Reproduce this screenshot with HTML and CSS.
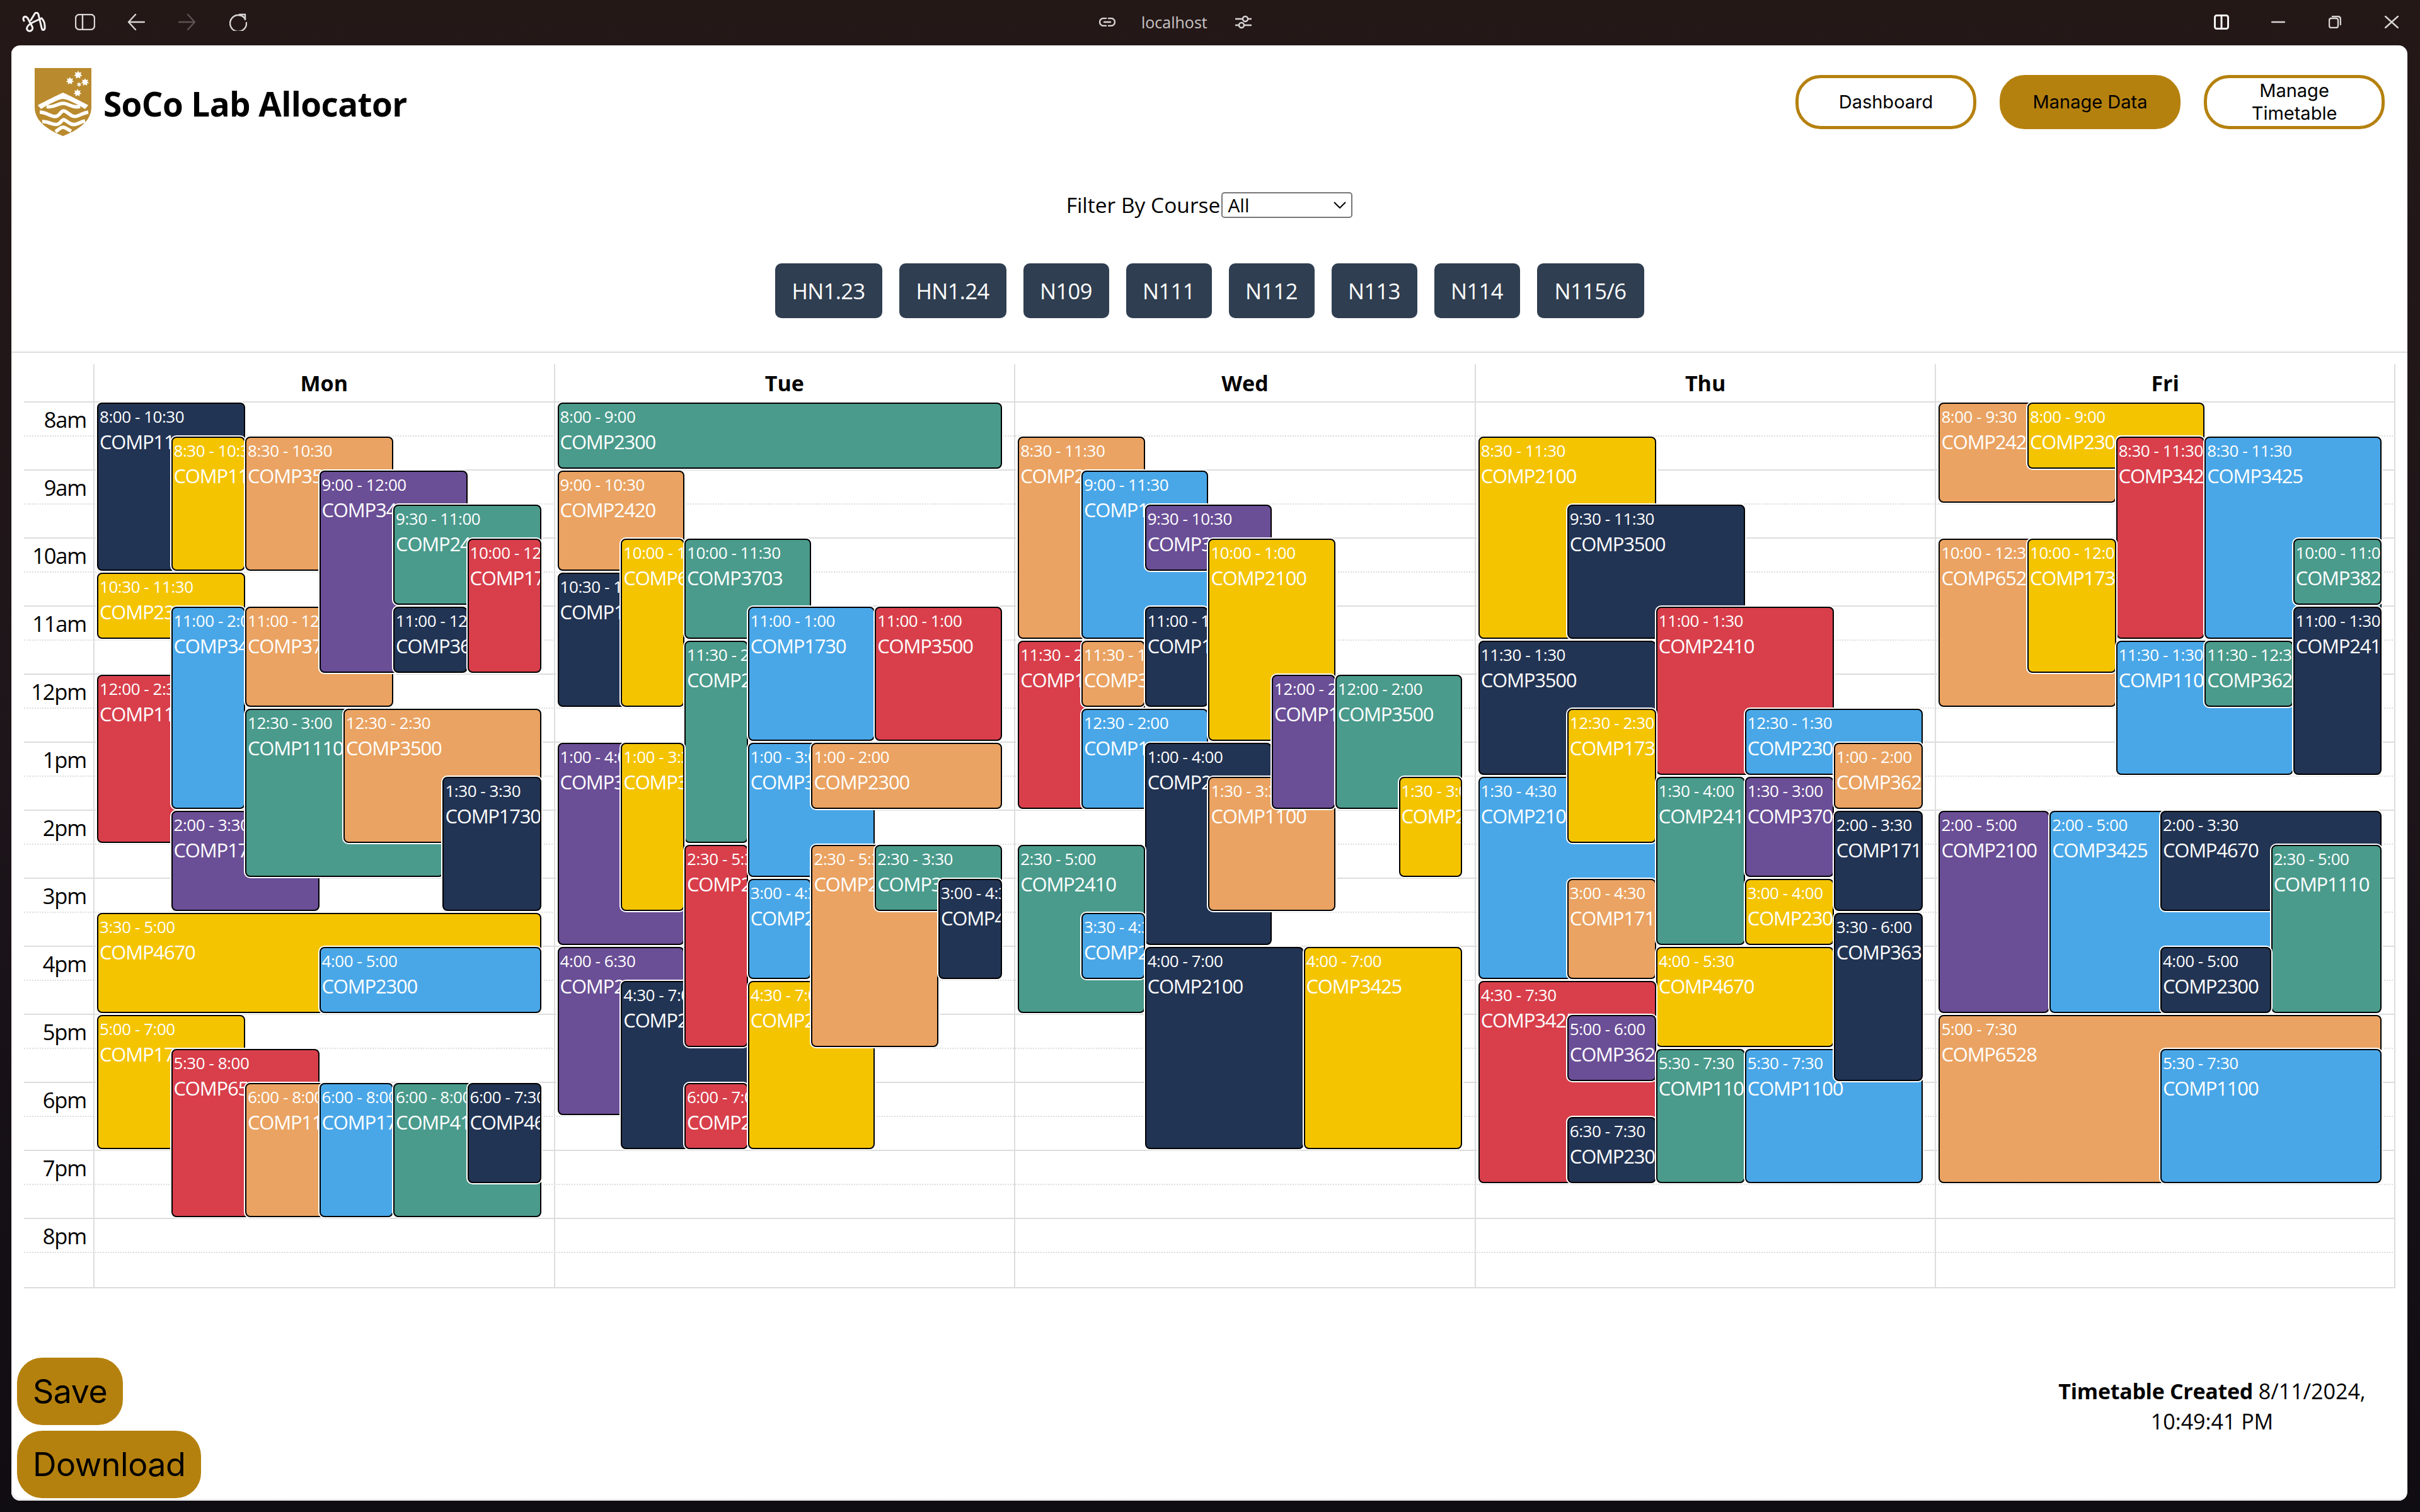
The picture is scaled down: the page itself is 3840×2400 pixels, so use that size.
FILE: index.html
```
<!DOCTYPE html>
<html lang="en">
<head>
<meta charset="utf-8">
<title>SoCo Lab Allocator</title>
<link rel="stylesheet" href="styles.css">
</head>
<body>
<div class="chrome">
  <div class="chrome-left">
    <span class="ic"><svg width="38" height="32" viewBox="0 0 38 32" class="ln white"><path d="M3 14C0 8 5 5 9 10L16 23C19 29 11 33 8 28C6 23 12 19 18 16L31 10"/><path d="M14 13L20 3C22 0 25 1 26 4L31 25C32 31 37 29 36 22C36 17 34 13 31 10"/></svg></span>
    <span class="ic"><svg width="32" height="26" viewBox="0 0 32 26" class="ln"><rect x="1" y="1" width="30" height="24" rx="6"/><path d="M12 1V25"/></svg></span>
    <span class="ic"><svg width="28" height="26" viewBox="0 0 28 26" class="ln"><path d="M27 13H2M13 1L2 13L13 25"/></svg></span>
    <span class="ic"><svg width="28" height="26" viewBox="0 0 28 26" class="ln dim"><path d="M1 13H26M15 1L26 13L15 25"/></svg></span>
    <span class="ic"><svg width="28" height="28" viewBox="0 0 28 28" class="ln"><path d="M25 9A13 13 0 1 0 27 15"/><path d="M16 2L25 2V10"/></svg></span>
  </div>
  <div class="chrome-mid">
    <svg width="26" height="14" viewBox="0 0 26 14" class="ln"><path d="M11 1H7A6 6 0 0 0 7 13H11M15 1H19A6 6 0 0 1 19 13H15M8 7H18"/></svg>
    <span class="host">localhost</span>
    <svg width="26" height="22" viewBox="0 0 26 22" class="ln"><path d="M0 6H12M20 6H26M0 16H6M14 16H26"/><circle cx="16" cy="6" r="4"/><circle cx="10" cy="16" r="4"/></svg>
  </div>
  <div class="chrome-right">
    <span class="ic wide"><svg width="24" height="24" viewBox="0 0 24 24" class="ln white"><rect x="1.500" y="1.500" width="21" height="21" rx="3"/><path d="M12 1V23"/></svg></span>
    <span class="ic wide"><svg width="22" height="4" viewBox="0 0 22 4" class="ln"><path d="M1 2H21"/></svg></span>
    <span class="ic wide"><svg width="20" height="20" viewBox="0 0 20 20" class="ln"><rect x="1" y="4" width="14" height="15" rx="3"/><path d="M6 1H14C17 1 19 3 19 6V14"/></svg></span>
    <span class="ic wide"><svg width="22" height="20" viewBox="0 0 22 20" class="ln"><path d="M1 1L21 19M21 1L1 19"/></svg></span>
  </div>
</div>

<main class="card">
  <header class="top">
    <div class="brand">
      <svg class="crest" width="90" height="108" viewBox="0 0 90 108">
        <path fill="#b98a2e" d="M0 0H90V62C90 84 70 98 45 108C20 98 0 84 0 62Z"/>
        <g fill="#fff">
          <path d="M69 4l1.600 3.500 3.700-1-1.500 3.500 3 2.200-3.600.7.300 3.800-3.500-2-3.500 2 .3-3.800-3.600-.7 3-2.200-1.500-3.500 3.700 1z"/>
          <path d="M56 14l1.500 3.300 3.500-1-1.400 3.400 2.800 2.100-3.400.7.300 3.500-3.300-1.900-3.300 1.900.3-3.500-3.400-.7 2.800-2.100-1.400-3.400 3.500 1z"/>
          <path d="M80 16l1.500 3.300 3.500-1-1.400 3.400 2.800 2.100-3.400.7.300 3.500-3.300-1.900-3.300 1.900.3-3.500-3.400-.7 2.800-2.100-1.400-3.400 3.500 1z"/>
          <path d="M70.500 22l1 2.400 2.600-.4-1.600 2.100 1.600 2.100-2.600-.4-1 2.400-1-2.400-2.600.4 1.600-2.100-1.600-2.100 2.600.4z"/>
          <path d="M68 33l1.500 3.300 3.500-1-1.400 3.400 2.800 2.100-3.400.7.300 3.500-3.300-1.900-3.300 1.900.3-3.500-3.400-.7 2.800-2.100-1.400-3.400 3.500 1z"/>
          <path d="M45 39C52 42 76 54 85 59L80 65C68 58 52 49 45 49C38 49 22 58 10 65L5 59C14 54 38 42 45 39Z"/>
        </g>
        <g fill="none" stroke="#fff" stroke-width="5.500">
          <path d="M19 61C30 64 36 56 45 56C54 56 60 64 72 61"/>
          <path d="M8 70C20 70 28 80 36 76C41 73 42 68 46 68C52 68 58 80 68 76C74 74 78 71 85 70"/>
          <path d="M12 85C22 84 30 92 37 89C42 87 43 82 46 82C50 82 56 92 66 89C72 87 74 85 80 84"/>
          <path d="M33 101C38 98 41 94 45 94C49 94 53 98 58 100"/>
        </g>
      </svg>
      <h1 class="title">SoCo Lab Allocator</h1>
    </div>
    <nav class="nav">
      <a class="pill">Dashboard</a>
      <a class="pill on">Manage Data</a>
      <a class="pill">Manage Timetable</a>
    </nav>
  </header>

  <div class="filter">
    <label class="filter-label" for="course">Filter By Course</label>
    <span class="select-wrap">
      <select id="course" class="filter-select"><option>All</option></select>
      <svg class="select-arrow" width="20" height="11" viewBox="0 0 20 11"><path d="M1 1L10 10L19 1"/></svg>
    </span>
  </div>

  <div class="rooms">
    <button class="room w">HN1.23</button>
    <button class="room w">HN1.24</button>
    <button class="room">N109</button>
    <button class="room">N111</button>
    <button class="room">N112</button>
    <button class="room">N113</button>
    <button class="room">N114</button>
    <button class="room w">N115/6</button>
  </div>

  <section class="calendar">
    <div class="head">
      <div class="head-axis"></div>
      <div class="head-day">Mon</div>
      <div class="head-day">Tue</div>
      <div class="head-day">Wed</div>
      <div class="head-day">Thu</div>
      <div class="head-day last">Fri</div>
    </div>
    <div class="grid">
      <div class="slots">
        <div class="slot"><span class="hour">8am</span></div><div class="slot hr"></div>
        <div class="slot"><span class="hour">9am</span></div><div class="slot hr"></div>
        <div class="slot"><span class="hour">10am</span></div><div class="slot hr"></div>
        <div class="slot"><span class="hour">11am</span></div><div class="slot hr"></div>
        <div class="slot"><span class="hour">12pm</span></div><div class="slot hr"></div>
        <div class="slot"><span class="hour">1pm</span></div><div class="slot hr"></div>
        <div class="slot"><span class="hour">2pm</span></div><div class="slot hr"></div>
        <div class="slot"><span class="hour">3pm</span></div><div class="slot hr"></div>
        <div class="slot"><span class="hour">4pm</span></div><div class="slot hr"></div>
        <div class="slot"><span class="hour">5pm</span></div><div class="slot hr"></div>
        <div class="slot"><span class="hour">6pm</span></div><div class="slot hr"></div>
        <div class="slot"><span class="hour">7pm</span></div><div class="slot hr"></div>
        <div class="slot"><span class="hour">8pm</span></div><div class="slot hr"></div>
      </div>
      <div class="days">
        <div class="day-axis"></div>

        <div class="day"><div class="events">
          <div class="ev navy" style="--s:0;--e:5;--l:0;--r:.3333"><span class="t">8:00 - 10:30</span><span class="c">COMP1100</span></div>
          <div class="ev yellow" style="--s:5;--e:7;--l:0;--r:.3333"><span class="t">10:30 - 11:30</span><span class="c">COMP2300</span></div>
          <div class="ev red" style="--s:8;--e:13;--l:0;--r:.3333"><span class="t">12:00 - 2:30</span><span class="c">COMP1100</span></div>
          <div class="ev yellow" style="--s:1;--e:5;--l:.1667;--r:.3333"><span class="t">8:30 - 10:30</span><span class="c">COMP1110</span></div>
          <div class="ev blue" style="--s:6;--e:12;--l:.1667;--r:.3333"><span class="t">11:00 - 2:00</span><span class="c">COMP3425</span></div>
          <div class="ev purple" style="--s:12;--e:15;--l:.1667;--r:.5"><span class="t">2:00 - 3:30</span><span class="c">COMP1710</span></div>
          <div class="ev orange" style="--s:1;--e:5;--l:.3333;--r:.6667"><span class="t">8:30 - 10:30</span><span class="c">COMP3500</span></div>
          <div class="ev orange" style="--s:6;--e:9;--l:.3333;--r:.6667"><span class="t">11:00 - 12:30</span><span class="c">COMP3703</span></div>
          <div class="ev teal" style="--s:9;--e:14;--l:.3333;--r:.78"><span class="t">12:30 - 3:00</span><span class="c">COMP1110</span></div>
          <div class="ev orange" style="--s:9;--e:13;--l:.5546;--r:1"><span class="t">12:30 - 2:30</span><span class="c">COMP3500</span></div>
          <div class="ev purple" style="--s:2;--e:8;--l:.5;--r:.8333"><span class="t">9:00 - 12:00</span><span class="c">COMP3425</span></div>
          <div class="ev teal" style="--s:3;--e:6;--l:.6667;--r:1"><span class="t">9:30 - 11:00</span><span class="c">COMP2420</span></div>
          <div class="ev navy" style="--s:6;--e:8;--l:.6667;--r:.8333"><span class="t">11:00 - 12:00</span><span class="c">COMP3630</span></div>
          <div class="ev red" style="--s:4;--e:8;--l:.8333;--r:1"><span class="t">10:00 - 12:00</span><span class="c">COMP1730</span></div>
          <div class="ev navy" style="--s:11;--e:15;--l:.7778;--r:1"><span class="t">1:30 - 3:30</span><span class="c">COMP1730</span></div>
          <div class="ev yellow" style="--s:15;--e:18;--l:0;--r:1"><span class="t">3:30 - 5:00</span><span class="c">COMP4670</span></div>
          <div class="ev blue" style="--s:16;--e:18;--l:.5;--r:1"><span class="t">4:00 - 5:00</span><span class="c">COMP2300</span></div>
          <div class="ev yellow" style="--s:18;--e:22;--l:0;--r:.3333"><span class="t">5:00 - 7:00</span><span class="c">COMP1730</span></div>
          <div class="ev red" style="--s:19;--e:24;--l:.1667;--r:.5"><span class="t">5:30 - 8:00</span><span class="c">COMP6528</span></div>
          <div class="ev orange" style="--s:20;--e:24;--l:.3333;--r:.6667"><span class="t">6:00 - 8:00</span><span class="c">COMP1100</span></div>
          <div class="ev blue" style="--s:20;--e:24;--l:.5;--r:.6667"><span class="t">6:00 - 8:00</span><span class="c">COMP1730</span></div>
          <div class="ev teal" style="--s:20;--e:24;--l:.6667;--r:1"><span class="t">6:00 - 8:00</span><span class="c">COMP4130</span></div>
          <div class="ev navy" style="--s:20;--e:23;--l:.8333;--r:1"><span class="t">6:00 - 7:30</span><span class="c">COMP4670</span></div>
        </div></div>

        <div class="day"><div class="events">
          <div class="ev teal" style="--s:0;--e:2;--l:0;--r:1"><span class="t">8:00 - 9:00</span><span class="c">COMP2300</span></div>
          <div class="ev orange" style="--s:2;--e:5;--l:0;--r:.2857"><span class="t">9:00 - 10:30</span><span class="c">COMP2420</span></div>
          <div class="ev navy" style="--s:5;--e:9;--l:0;--r:.2857"><span class="t">10:30 - 12:30</span><span class="c">COMP1100</span></div>
          <div class="ev yellow" style="--s:4;--e:9;--l:.1429;--r:.2857"><span class="t">10:00 - 12:30</span><span class="c">COMP6528</span></div>
          <div class="ev teal" style="--s:4;--e:7;--l:.2857;--r:.5714"><span class="t">10:00 - 11:30</span><span class="c">COMP3703</span></div>
          <div class="ev teal" style="--s:7;--e:13;--l:.2857;--r:.4286"><span class="t">11:30 - 2:30</span><span class="c">COMP2420</span></div>
          <div class="ev blue" style="--s:6;--e:10;--l:.4286;--r:.7143"><span class="t">11:00 - 1:00</span><span class="c">COMP1730</span></div>
          <div class="ev red" style="--s:6;--e:10;--l:.7143;--r:1"><span class="t">11:00 - 1:00</span><span class="c">COMP3500</span></div>
          <div class="ev purple" style="--s:10;--e:16;--l:0;--r:.2857"><span class="t">1:00 - 4:00</span><span class="c">COMP3425</span></div>
          <div class="ev yellow" style="--s:10;--e:15;--l:.1429;--r:.2857"><span class="t">1:00 - 3:30</span><span class="c">COMP3500</span></div>
          <div class="ev purple" style="--s:16;--e:21;--l:0;--r:.2857"><span class="t">4:00 - 6:30</span><span class="c">COMP2100</span></div>
          <div class="ev navy" style="--s:17;--e:22;--l:.1429;--r:.4286"><span class="t">4:30 - 7:00</span><span class="c">COMP2300</span></div>
          <div class="ev red" style="--s:13;--e:19;--l:.2857;--r:.4286"><span class="t">2:30 - 5:30</span><span class="c">COMP2410</span></div>
          <div class="ev red" style="--s:20;--e:22;--l:.2857;--r:.4286"><span class="t">6:00 - 7:00</span><span class="c">COMP2100</span></div>
          <div class="ev blue" style="--s:10;--e:14;--l:.4286;--r:.7143"><span class="t">1:00 - 3:00</span><span class="c">COMP3425</span></div>
          <div class="ev blue" style="--s:14;--e:17;--l:.4286;--r:.5714"><span class="t">3:00 - 4:30</span><span class="c">COMP2100</span></div>
          <div class="ev yellow" style="--s:17;--e:22;--l:.4286;--r:.7143"><span class="t">4:30 - 7:00</span><span class="c">COMP2420</span></div>
          <div class="ev orange" style="--s:10;--e:12;--l:.5714;--r:1"><span class="t">1:00 - 2:00</span><span class="c">COMP2300</span></div>
          <div class="ev orange" style="--s:13;--e:19;--l:.5714;--r:.8571"><span class="t">2:30 - 5:30</span><span class="c">COMP2410</span></div>
          <div class="ev teal" style="--s:13;--e:15;--l:.7143;--r:1"><span class="t">2:30 - 3:30</span><span class="c">COMP3703</span></div>
          <div class="ev navy" style="--s:14;--e:17;--l:.8571;--r:1"><span class="t">3:00 - 4:30</span><span class="c">COMP4670</span></div>
        </div></div>

        <div class="day"><div class="events">
          <div class="ev orange" style="--s:1;--e:7;--l:0;--r:.2857"><span class="t">8:30 - 11:30</span><span class="c">COMP2100</span></div>
          <div class="ev blue" style="--s:2;--e:7;--l:.1429;--r:.4286"><span class="t">9:00 - 11:30</span><span class="c">COMP1100</span></div>
          <div class="ev purple" style="--s:3;--e:5;--l:.2857;--r:.5714"><span class="t">9:30 - 10:30</span><span class="c">COMP3703</span></div>
          <div class="ev red" style="--s:7;--e:12;--l:0;--r:.2857"><span class="t">11:30 - 2:00</span><span class="c">COMP1730</span></div>
          <div class="ev orange" style="--s:7;--e:9;--l:.1429;--r:.2857"><span class="t">11:30 - 12:30</span><span class="c">COMP3500</span></div>
          <div class="ev navy" style="--s:6;--e:9;--l:.2857;--r:.4286"><span class="t">11:00 - 12:30</span><span class="c">COMP1110</span></div>
          <div class="ev blue" style="--s:9;--e:12;--l:.1429;--r:.4286"><span class="t">12:30 - 2:00</span><span class="c">COMP1100</span></div>
          <div class="ev yellow" style="--s:4;--e:10;--l:.4286;--r:.7143"><span class="t">10:00 - 1:00</span><span class="c">COMP2100</span></div>
          <div class="ev navy" style="--s:10;--e:16;--l:.2857;--r:.5714"><span class="t">1:00 - 4:00</span><span class="c">COMP2420</span></div>
          <div class="ev orange" style="--s:11;--e:15;--l:.4286;--r:.7143"><span class="t">1:30 - 3:30</span><span class="c">COMP1100</span></div>
          <div class="ev purple" style="--s:8;--e:12;--l:.5714;--r:.7143"><span class="t">12:00 - 2:00</span><span class="c">COMP1730</span></div>
          <div class="ev teal" style="--s:8;--e:12;--l:.7143;--r:1"><span class="t">12:00 - 2:00</span><span class="c">COMP3500</span></div>
          <div class="ev yellow" style="--s:11;--e:14;--l:.8571;--r:1"><span class="t">1:30 - 3:00</span><span class="c">COMP2300</span></div>
          <div class="ev teal" style="--s:13;--e:18;--l:0;--r:.2857"><span class="t">2:30 - 5:00</span><span class="c">COMP2410</span></div>
          <div class="ev blue" style="--s:15;--e:17;--l:.1429;--r:.2857"><span class="t">3:30 - 4:30</span><span class="c">COMP2300</span></div>
          <div class="ev navy" style="--s:16;--e:22;--l:.2857;--r:.6429"><span class="t">4:00 - 7:00</span><span class="c">COMP2100</span></div>
          <div class="ev yellow" style="--s:16;--e:22;--l:.6429;--r:1"><span class="t">4:00 - 7:00</span><span class="c">COMP3425</span></div>
        </div></div>

        <div class="day"><div class="events">
          <div class="ev yellow" style="--s:1;--e:7;--l:0;--r:.4"><span class="t">8:30 - 11:30</span><span class="c">COMP2100</span></div>
          <div class="ev navy" style="--s:3;--e:7;--l:.2;--r:.6"><span class="t">9:30 - 11:30</span><span class="c">COMP3500</span></div>
          <div class="ev navy" style="--s:7;--e:11;--l:0;--r:.4"><span class="t">11:30 - 1:30</span><span class="c">COMP3500</span></div>
          <div class="ev red" style="--s:6;--e:11;--l:.4;--r:.8"><span class="t">11:00 - 1:30</span><span class="c">COMP2410</span></div>
          <div class="ev blue" style="--s:11;--e:17;--l:0;--r:.4"><span class="t">1:30 - 4:30</span><span class="c">COMP2100</span></div>
          <div class="ev yellow" style="--s:9;--e:13;--l:.2;--r:.4"><span class="t">12:30 - 2:30</span><span class="c">COMP1730</span></div>
          <div class="ev orange" style="--s:14;--e:17;--l:.2;--r:.4"><span class="t">3:00 - 4:30</span><span class="c">COMP1710</span></div>
          <div class="ev teal" style="--s:11;--e:16;--l:.4;--r:.6"><span class="t">1:30 - 4:00</span><span class="c">COMP2410</span></div>
          <div class="ev blue" style="--s:9;--e:11;--l:.6;--r:1"><span class="t">12:30 - 1:30</span><span class="c">COMP2300</span></div>
          <div class="ev purple" style="--s:11;--e:14;--l:.6;--r:.8"><span class="t">1:30 - 3:00</span><span class="c">COMP3703</span></div>
          <div class="ev yellow" style="--s:14;--e:16;--l:.6;--r:.8"><span class="t">3:00 - 4:00</span><span class="c">COMP2300</span></div>
          <div class="ev orange" style="--s:10;--e:12;--l:.8;--r:1"><span class="t">1:00 - 2:00</span><span class="c">COMP3625</span></div>
          <div class="ev navy" style="--s:12;--e:15;--l:.8;--r:1"><span class="t">2:00 - 3:30</span><span class="c">COMP1710</span></div>
          <div class="ev yellow" style="--s:16;--e:19;--l:.4;--r:.8"><span class="t">4:00 - 5:30</span><span class="c">COMP4670</span></div>
          <div class="ev red" style="--s:17;--e:23;--l:0;--r:.4"><span class="t">4:30 - 7:30</span><span class="c">COMP3425</span></div>
          <div class="ev purple" style="--s:18;--e:20;--l:.2;--r:.4"><span class="t">5:00 - 6:00</span><span class="c">COMP3625</span></div>
          <div class="ev navy" style="--s:21;--e:23;--l:.2;--r:.4"><span class="t">6:30 - 7:30</span><span class="c">COMP2300</span></div>
          <div class="ev teal" style="--s:19;--e:23;--l:.4;--r:.6"><span class="t">5:30 - 7:30</span><span class="c">COMP1100</span></div>
          <div class="ev blue" style="--s:19;--e:23;--l:.6;--r:1"><span class="t">5:30 - 7:30</span><span class="c">COMP1100</span></div>
          <div class="ev navy" style="--s:15;--e:20;--l:.8;--r:1"><span class="t">3:30 - 6:00</span><span class="c">COMP3630</span></div>
        </div></div>

        <div class="day last"><div class="events">
          <div class="ev orange" style="--s:0;--e:3;--l:0;--r:.4"><span class="t">8:00 - 9:30</span><span class="c">COMP2420</span></div>
          <div class="ev yellow" style="--s:0;--e:2;--l:.2;--r:.6"><span class="t">8:00 - 9:00</span><span class="c">COMP2300</span></div>
          <div class="ev red" style="--s:1;--e:7;--l:.4;--r:.6"><span class="t">8:30 - 11:30</span><span class="c">COMP3425</span></div>
          <div class="ev blue" style="--s:1;--e:7;--l:.6;--r:1"><span class="t">8:30 - 11:30</span><span class="c">COMP3425</span></div>
          <div class="ev orange" style="--s:4;--e:9;--l:0;--r:.4"><span class="t">10:00 - 12:30</span><span class="c">COMP6528</span></div>
          <div class="ev yellow" style="--s:4;--e:8;--l:.2;--r:.4"><span class="t">10:00 - 12:00</span><span class="c">COMP1730</span></div>
          <div class="ev teal" style="--s:4;--e:6;--l:.8;--r:1"><span class="t">10:00 - 11:00</span><span class="c">COMP3820</span></div>
          <div class="ev blue" style="--s:7;--e:11;--l:.4;--r:.8"><span class="t">11:30 - 1:30</span><span class="c">COMP1100</span></div>
          <div class="ev teal" style="--s:7;--e:9;--l:.6;--r:.8"><span class="t">11:30 - 12:30</span><span class="c">COMP3625</span></div>
          <div class="ev navy" style="--s:6;--e:11;--l:.8;--r:1"><span class="t">11:00 - 1:30</span><span class="c">COMP2410</span></div>
          <div class="ev purple" style="--s:12;--e:18;--l:0;--r:.25"><span class="t">2:00 - 5:00</span><span class="c">COMP2100</span></div>
          <div class="ev blue" style="--s:12;--e:18;--l:.25;--r:.75"><span class="t">2:00 - 5:00</span><span class="c">COMP3425</span></div>
          <div class="ev navy" style="--s:12;--e:15;--l:.5;--r:1"><span class="t">2:00 - 3:30</span><span class="c">COMP4670</span></div>
          <div class="ev teal" style="--s:13;--e:18;--l:.75;--r:1"><span class="t">2:30 - 5:00</span><span class="c">COMP1110</span></div>
          <div class="ev navy" style="--s:16;--e:18;--l:.5;--r:.75"><span class="t">4:00 - 5:00</span><span class="c">COMP2300</span></div>
          <div class="ev orange" style="--s:18;--e:23;--l:0;--r:1"><span class="t">5:00 - 7:30</span><span class="c">COMP6528</span></div>
          <div class="ev blue" style="--s:19;--e:23;--l:.5;--r:1"><span class="t">5:30 - 7:30</span><span class="c">COMP1100</span></div>
        </div></div>
      </div>
    </div>
  </section>

  <footer class="foot">
    <div class="actions">
      <button class="act">Save</button>
      <button class="act">Download</button>
    </div>
    <p class="stamp"><strong>Timetable Created</strong> 8/11/2024, 10:49:41 PM</p>
  </footer>
</main>
</body>
</html>
```
FILE: styles.css
```
* { box-sizing: border-box; }
html, body { margin: 0; height: 100%; }
body {
  width: 3840px;
  height: 2400px;
  overflow: hidden;
  display: flex;
  flex-direction: column;
  padding: 0 20px 18px 18px;
  background: linear-gradient(180deg, #241817 0%, #1d151a 50%, #0f0c12 100%);
  font-family: "Open Sans", "Noto Sans", sans-serif;
  color: #000;
}

/* browser chrome */
.chrome { height: 72px; flex: none; display: flex; align-items: center; margin: 0 -20px 0 -18px; padding-bottom: 2px; }
.chrome-left { width: 1744px; flex: none; display: flex; padding-left: 13px; }
.chrome-mid { display: flex; align-items: center; gap: 44px; }
.chrome-right { margin-left: auto; display: flex; }
.ic { width: 81px; height: 40px; display: flex; align-items: center; justify-content: center; }
.ic.wide { width: 90px; }
.ln { fill: none; stroke: #d9d5d5; stroke-width: 2.4; stroke-linecap: round; stroke-linejoin: round; display: block; }
.ln.white { stroke: #f4f2f2; stroke-width: 3; }
.ln.dim { stroke: #5d5252; }
.host { color: #c9c5c5; font-size: 25px; margin-left: -3px; }

/* card */
.card {
  flex: 1;
  min-height: 0;
  display: flex;
  flex-direction: column;
  background: #fff;
  border-radius: 14px;
  box-shadow: inset 2px -3px 0 #eee;
}
.top { display: flex; align-items: center; justify-content: space-between; padding: 36px 36px 0 37px; }
.brand { display: flex; align-items: center; gap: 19px; }
.crest { display: block; flex: none; }
.title { margin: 6px 0 0; font-size: 53px; line-height: 1.2; font-weight: 700; letter-spacing: -.6px; }
.nav { display: flex; gap: 37px; }
.pill {
  width: 287px;
  height: 86px;
  display: flex;
  align-items: center;
  justify-content: center;
  text-align: center;
  padding: 0 30px;
  border: 5px solid #b5810e;
  border-radius: 40px;
  font-family: Inter, sans-serif;
  font-size: 29px;
  line-height: 36px;
}
.pill.on { background: #b5810e; }

.filter { display: flex; justify-content: center; align-items: center; margin-top: 89px; height: 41px; }
.filter-label { font-size: 33.500px; line-height: 41px; }
.select-wrap { position: relative; display: block; width: 208px; height: 41px; margin-left: 2px; }
.filter-select {
  display: block;
  width: 100%;
  height: 41px;
  appearance: none;
  font-family: "Open Sans", sans-serif;
  font-size: 30px;
  line-height: 37px;
  color: #000;
  background: #fff;
  border: 2px solid #767676;
  border-radius: 5px;
  padding: 0 8px;
}
.select-arrow { position: absolute; top: 15px; right: 10px; fill: none; stroke: #000; stroke-width: 2; pointer-events: none; }

.rooms { display: flex; justify-content: center; gap: 27px; margin-top: 72px; }
.room {
  width: 136px;
  height: 87px;
  padding: 0;
  border: 0;
  border-radius: 10px;
  background: #2f3e50;
  color: #fff;
  font-family: "Open Sans", sans-serif;
  font-size: 34.500px;
  letter-spacing: -.6px;
}
.room.w { width: 170px; }

/* calendar */
.calendar { margin-top: 53px; border-top: 2px solid #ddd; padding: 18px 19px 0 20px; }
.head { display: grid; grid-template-columns: 110px repeat(5, 1fr); height: 61px; border-bottom: 2px solid #ddd; }
.head-axis { min-width: 0; }
.head-day { border-left: 2px solid #ddd; text-align: center; font-size: 34px; font-weight: 700; line-height: 60px; }
.head-day.last { border-right: 2px solid #ddd; }
.grid { position: relative; }
.slots { border-bottom: 2px solid #ddd; }
.slot { height: 54px; border-bottom: 2px dotted #ddd; display: flex; align-items: center; justify-content: flex-start; }
.slot.hr { border-bottom: 2px solid #ddd; }
.slot:last-child { border-bottom-color: transparent; }
.hour { width: 99px; padding-top: 3px; text-align: right; font-size: 34.500px; letter-spacing: -1.200px; line-height: 1; white-space: nowrap; }
.days { position: absolute; inset: 0; display: grid; grid-template-columns: 110px repeat(5, 1fr); }
.day { position: relative; border-left: 2px solid #ddd; }
.day.last { border-right: 2px solid #ddd; }
.events { position: absolute; inset: 0 19.500px 0 4px; }

.ev {
  position: absolute;
  top: calc(var(--s) * 54px);
  height: calc((var(--e) - var(--s)) * 54px - 3px);
  left: calc(var(--l) * 100%);
  right: calc((1 - var(--r)) * 100%);
  padding: 0 2px;
  overflow: hidden;
  border: 2px solid #000;
  border-radius: 8px;
  box-shadow: 0 0 0 2px #fff;
  color: #fff;
  white-space: nowrap;
}
.t { display: block; font-size: 26px; line-height: 41px; letter-spacing: -.45px; }
.c { display: block; font-size: 31px; line-height: 39px; letter-spacing: -1.200px; }
.navy { background: #223454; }
.yellow { background: #f5c400; }
.orange { background: #eaa362; }
.teal { background: #4a9b8c; }
.purple { background: #6a4e96; }
.red { background: #d83f4b; }
.blue { background: #49a7e8; }

/* footer */
.foot { margin-top: auto; display: flex; align-items: center; justify-content: space-between; padding: 0 50px 4px 9px; }
.actions { display: flex; flex-direction: column; align-items: flex-start; gap: 9px; }
.act {
  height: 107px;
  padding: 0 25px;
  border: 0;
  border-radius: 40px;
  background: #b5810e;
  color: #000;
  font-family: Inter, sans-serif;
  font-size: 52px;
  letter-spacing: -.5px;
}
.stamp { width: 520px; margin: 0 0 70px; text-align: center; font-size: 34px; line-height: 48px; }
.stamp strong { font-weight: 700; letter-spacing: -.3px; }
```
